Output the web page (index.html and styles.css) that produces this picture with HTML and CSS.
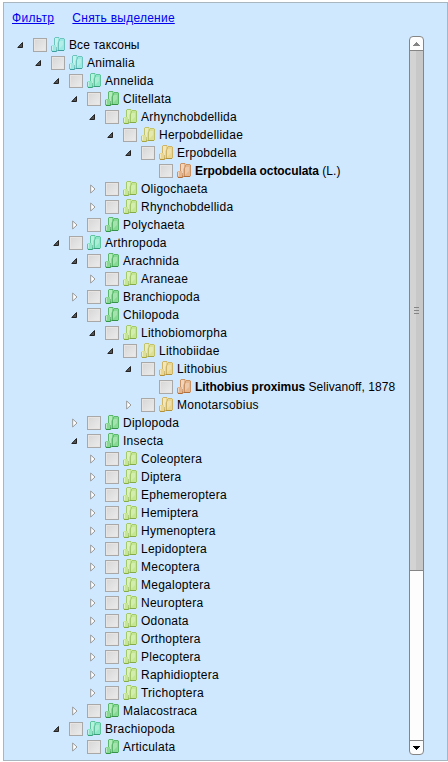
FILE: index.html
```html
<!DOCTYPE html>
<html lang="ru">
<head>
<meta charset="utf-8">
<title>Таксоны</title>
<link rel="stylesheet" href="styles.css">
</head>
<body>
<svg class="defs" aria-hidden="true">
  <symbol id="open" viewBox="0 0 8 8"><path d="M0.8 6.5L5.5 1.5V6.5Z" fill="#555" stroke="#222" stroke-width="1"/></symbol>
  <symbol id="shut" viewBox="0 0 6 10"><path d="M.7 1L5 5L.7 9Z" fill="#fff" stroke="#989898" stroke-width="1"/></symbol>
  <symbol id="folder" viewBox="0 0 14 16">
    <path d="M3 1L4 0H8L9 1H13L14 2V13L13 14H7L5 15H1L0 14V9L1 8H3Z" fill="currentColor"/>
    <path d="M4 1H7V5L6 6V12H5V8H4Z" fill="#fff" fill-opacity=".4"/>
    <path d="M8 5L9 4H12V8L8 12Z" fill="#fff" fill-opacity=".25"/>
    <path d="M1 9H2V13H1Z" fill="#fff" fill-opacity=".45"/>
    <path d="M3.5 1V8M4 .5H8M9 1.5H13M13.5 2V13M.5 9V14M7.5 4.5V13M8 4.5L8.5 2M5.5 10V14" fill="none" stroke="var(--edge)" stroke-opacity=".42"/>
    <path d="M7 13.5H13M1 14.5H5L6.5 13.5" fill="none" stroke="var(--edge)" stroke-opacity=".85"/>
  </symbol>
</svg>
<main class="panel">
  <nav class="links"><a href="#">Фильтр</a><a href="#">Снять выделение</a></nav>
  <div class="body">
    <ul class="tree">
      <li class="d0 cyan"><svg class="tw"><use href="#open"/></svg><span class="cb"></span><svg class="ic"><use href="#folder"/></svg><span class="root">Все таксоны</span></li>
      <li class="d1 cyan"><svg class="tw"><use href="#open"/></svg><span class="cb"></span><svg class="ic"><use href="#folder"/></svg><span>Animalia</span></li>
      <li class="d2 mint"><svg class="tw"><use href="#open"/></svg><span class="cb"></span><svg class="ic"><use href="#folder"/></svg><span>Annelida</span></li>
      <li class="d3 green"><svg class="tw"><use href="#open"/></svg><span class="cb"></span><svg class="ic"><use href="#folder"/></svg><span>Clitellata</span></li>
      <li class="d4 lime"><svg class="tw"><use href="#open"/></svg><span class="cb"></span><svg class="ic"><use href="#folder"/></svg><span>Arhynchobdellida</span></li>
      <li class="d5 olive"><svg class="tw"><use href="#open"/></svg><span class="cb"></span><svg class="ic"><use href="#folder"/></svg><span>Herpobdellidae</span></li>
      <li class="d6 gold"><svg class="tw"><use href="#open"/></svg><span class="cb"></span><svg class="ic"><use href="#folder"/></svg><span>Erpobdella</span></li>
      <li class="d7 orange"><svg class="tw"></svg><span class="cb"></span><svg class="ic"><use href="#folder"/></svg><span class="species"><b>Erpobdella octoculata</b> (L.)</span></li>
      <li class="d4 lime"><svg class="tw shut"><use href="#shut"/></svg><span class="cb"></span><svg class="ic"><use href="#folder"/></svg><span>Oligochaeta</span></li>
      <li class="d4 lime"><svg class="tw shut"><use href="#shut"/></svg><span class="cb"></span><svg class="ic"><use href="#folder"/></svg><span>Rhynchobdellida</span></li>
      <li class="d3 green"><svg class="tw shut"><use href="#shut"/></svg><span class="cb"></span><svg class="ic"><use href="#folder"/></svg><span>Polychaeta</span></li>
      <li class="d2 mint"><svg class="tw"><use href="#open"/></svg><span class="cb"></span><svg class="ic"><use href="#folder"/></svg><span>Arthropoda</span></li>
      <li class="d3 green"><svg class="tw"><use href="#open"/></svg><span class="cb"></span><svg class="ic"><use href="#folder"/></svg><span>Arachnida</span></li>
      <li class="d4 lime"><svg class="tw shut"><use href="#shut"/></svg><span class="cb"></span><svg class="ic"><use href="#folder"/></svg><span>Araneae</span></li>
      <li class="d3 green"><svg class="tw shut"><use href="#shut"/></svg><span class="cb"></span><svg class="ic"><use href="#folder"/></svg><span>Branchiopoda</span></li>
      <li class="d3 green"><svg class="tw"><use href="#open"/></svg><span class="cb"></span><svg class="ic"><use href="#folder"/></svg><span>Chilopoda</span></li>
      <li class="d4 lime"><svg class="tw"><use href="#open"/></svg><span class="cb"></span><svg class="ic"><use href="#folder"/></svg><span>Lithobiomorpha</span></li>
      <li class="d5 olive"><svg class="tw"><use href="#open"/></svg><span class="cb"></span><svg class="ic"><use href="#folder"/></svg><span>Lithobiidae</span></li>
      <li class="d6 gold"><svg class="tw"><use href="#open"/></svg><span class="cb"></span><svg class="ic"><use href="#folder"/></svg><span>Lithobius</span></li>
      <li class="d7 orange"><svg class="tw"></svg><span class="cb"></span><svg class="ic"><use href="#folder"/></svg><span class="species"><b>Lithobius proximus</b> Selivanoff, 1878</span></li>
      <li class="d6 gold"><svg class="tw shut"><use href="#shut"/></svg><span class="cb"></span><svg class="ic"><use href="#folder"/></svg><span>Monotarsobius</span></li>
      <li class="d3 green"><svg class="tw shut"><use href="#shut"/></svg><span class="cb"></span><svg class="ic"><use href="#folder"/></svg><span>Diplopoda</span></li>
      <li class="d3 green"><svg class="tw"><use href="#open"/></svg><span class="cb"></span><svg class="ic"><use href="#folder"/></svg><span>Insecta</span></li>
      <li class="d4 lime"><svg class="tw shut"><use href="#shut"/></svg><span class="cb"></span><svg class="ic"><use href="#folder"/></svg><span>Coleoptera</span></li>
      <li class="d4 lime"><svg class="tw shut"><use href="#shut"/></svg><span class="cb"></span><svg class="ic"><use href="#folder"/></svg><span>Diptera</span></li>
      <li class="d4 lime"><svg class="tw shut"><use href="#shut"/></svg><span class="cb"></span><svg class="ic"><use href="#folder"/></svg><span>Ephemeroptera</span></li>
      <li class="d4 lime"><svg class="tw shut"><use href="#shut"/></svg><span class="cb"></span><svg class="ic"><use href="#folder"/></svg><span>Hemiptera</span></li>
      <li class="d4 lime"><svg class="tw shut"><use href="#shut"/></svg><span class="cb"></span><svg class="ic"><use href="#folder"/></svg><span>Hymenoptera</span></li>
      <li class="d4 lime"><svg class="tw shut"><use href="#shut"/></svg><span class="cb"></span><svg class="ic"><use href="#folder"/></svg><span>Lepidoptera</span></li>
      <li class="d4 lime"><svg class="tw shut"><use href="#shut"/></svg><span class="cb"></span><svg class="ic"><use href="#folder"/></svg><span>Mecoptera</span></li>
      <li class="d4 lime"><svg class="tw shut"><use href="#shut"/></svg><span class="cb"></span><svg class="ic"><use href="#folder"/></svg><span>Megaloptera</span></li>
      <li class="d4 lime"><svg class="tw shut"><use href="#shut"/></svg><span class="cb"></span><svg class="ic"><use href="#folder"/></svg><span>Neuroptera</span></li>
      <li class="d4 lime"><svg class="tw shut"><use href="#shut"/></svg><span class="cb"></span><svg class="ic"><use href="#folder"/></svg><span>Odonata</span></li>
      <li class="d4 lime"><svg class="tw shut"><use href="#shut"/></svg><span class="cb"></span><svg class="ic"><use href="#folder"/></svg><span>Orthoptera</span></li>
      <li class="d4 lime"><svg class="tw shut"><use href="#shut"/></svg><span class="cb"></span><svg class="ic"><use href="#folder"/></svg><span>Plecoptera</span></li>
      <li class="d4 lime"><svg class="tw shut"><use href="#shut"/></svg><span class="cb"></span><svg class="ic"><use href="#folder"/></svg><span>Raphidioptera</span></li>
      <li class="d4 lime"><svg class="tw shut"><use href="#shut"/></svg><span class="cb"></span><svg class="ic"><use href="#folder"/></svg><span>Trichoptera</span></li>
      <li class="d3 green"><svg class="tw shut"><use href="#shut"/></svg><span class="cb"></span><svg class="ic"><use href="#folder"/></svg><span>Malacostraca</span></li>
      <li class="d2 mint"><svg class="tw"><use href="#open"/></svg><span class="cb"></span><svg class="ic"><use href="#folder"/></svg><span>Brachiopoda</span></li>
      <li class="d3 green"><svg class="tw shut"><use href="#shut"/></svg><span class="cb"></span><svg class="ic"><use href="#folder"/></svg><span>Articulata</span></li>
    </ul>
    <div class="scroll">
      <div class="btn up"><svg width="7" height="4"><path d="M3 0H4V1H5V2H6V3H7V4H0V3H1V2H2V1H3Z"/></svg></div>
      <div class="thumb"><i></i><i></i><i></i></div>
      <div class="track"></div>
      <div class="btn down"><svg width="7" height="4"><path d="M0 0H7V1H6V2H5V3H4V4H3V3H2V2H1V1H0Z"/></svg></div>
    </div>
  </div>
</main>
</body>
</html>
```
FILE: styles.css
```css
* { box-sizing: border-box; }
body {
  margin: 0;
  padding: 2px 0 0 3px;
  height: 762px;
  overflow: hidden;
  background: #fff;
  font: 12px/18px "Liberation Sans", Arial, sans-serif;
  letter-spacing: .24px;
  color: #000;
}
.defs { display: none; }
.panel {
  width: 445px;
  height: 759px;
  border: 1px solid #a9b5bf;
  background: #d0e8fe;
}
.links {
  display: flex;
  gap: 18px;
  height: 33px;
  padding: 6px 0 0 8px;
}
.links a { color: #00e; text-decoration: underline; }
.links a:first-child { letter-spacing: .34px; }
.body { display: flex; }
.tree {
  width: 405px;
  margin: 0;
  padding: 0 0 0 13px;
  list-style: none;
}
.tree li {
  display: flex;
  align-items: center;
  height: 18px;
  white-space: nowrap;
}
.root { letter-spacing: .1px; }
.species { letter-spacing: .05px; }
.species b { letter-spacing: -.07px; }
.d1 { margin-left: 18px; }
.d2 { margin-left: 36px; }
.d3 { margin-left: 54px; }
.d4 { margin-left: 72px; }
.d5 { margin-left: 90px; }
.d6 { margin-left: 108px; }
.d7 { margin-left: 126px; }
.cyan { --fill: #9be9e2; --edge: #2f8f90; }
.mint { --fill: #8be7c6; --edge: #2a926c; }
.green { --fill: #86da93; --edge: #278539; }
.lime { --fill: #c5e794; --edge: #78a038; }
.olive { --fill: #dde094; --edge: #9c9a34; }
.gold { --fill: #ead68f; --edge: #a8862f; }
.orange { --fill: #e6b78f; --edge: #a5622d; }
.tw { width: 8px; height: 8px; margin-right: 8px; flex: none; }
.tw.shut { width: 6px; height: 10px; margin: 0 9px 0 1px; }
.cb {
  width: 14px;
  height: 14px;
  margin-right: 4px;
  flex: none;
  border: 1px solid #a8a8a8;
  background: linear-gradient(135deg, #d6d6d6, #ececec);
  box-shadow: inset 0 0 0 1px #e8e4e2;
}
.ic { width: 14px; height: 16px; margin-right: 4px; flex: none; color: var(--fill); }
.scroll {
  display: flex;
  flex-direction: column;
  width: 15px;
  height: 719px;
  border: 1px solid #858585;
  border-radius: 4px;
  background: #fdfdfd;
  overflow: hidden;
}
.btn { display: flex; align-items: center; justify-content: center; height: 13px; }
.up { fill: #858585; }
.down { height: 14px; border-top: 1px solid #858585; fill: #000; }
.thumb {
  display: flex;
  flex-direction: column;
  align-items: center;
  justify-content: center;
  gap: 2px;
  height: 521px;
  border: solid #858585;
  border-width: 1px 0;
  background: linear-gradient(90deg, #d3d3d3 50%, #c8c8c8 50%);
}
.thumb i { width: 5px; height: 1px; background: #858585; }
.track { flex: 1; }
```
